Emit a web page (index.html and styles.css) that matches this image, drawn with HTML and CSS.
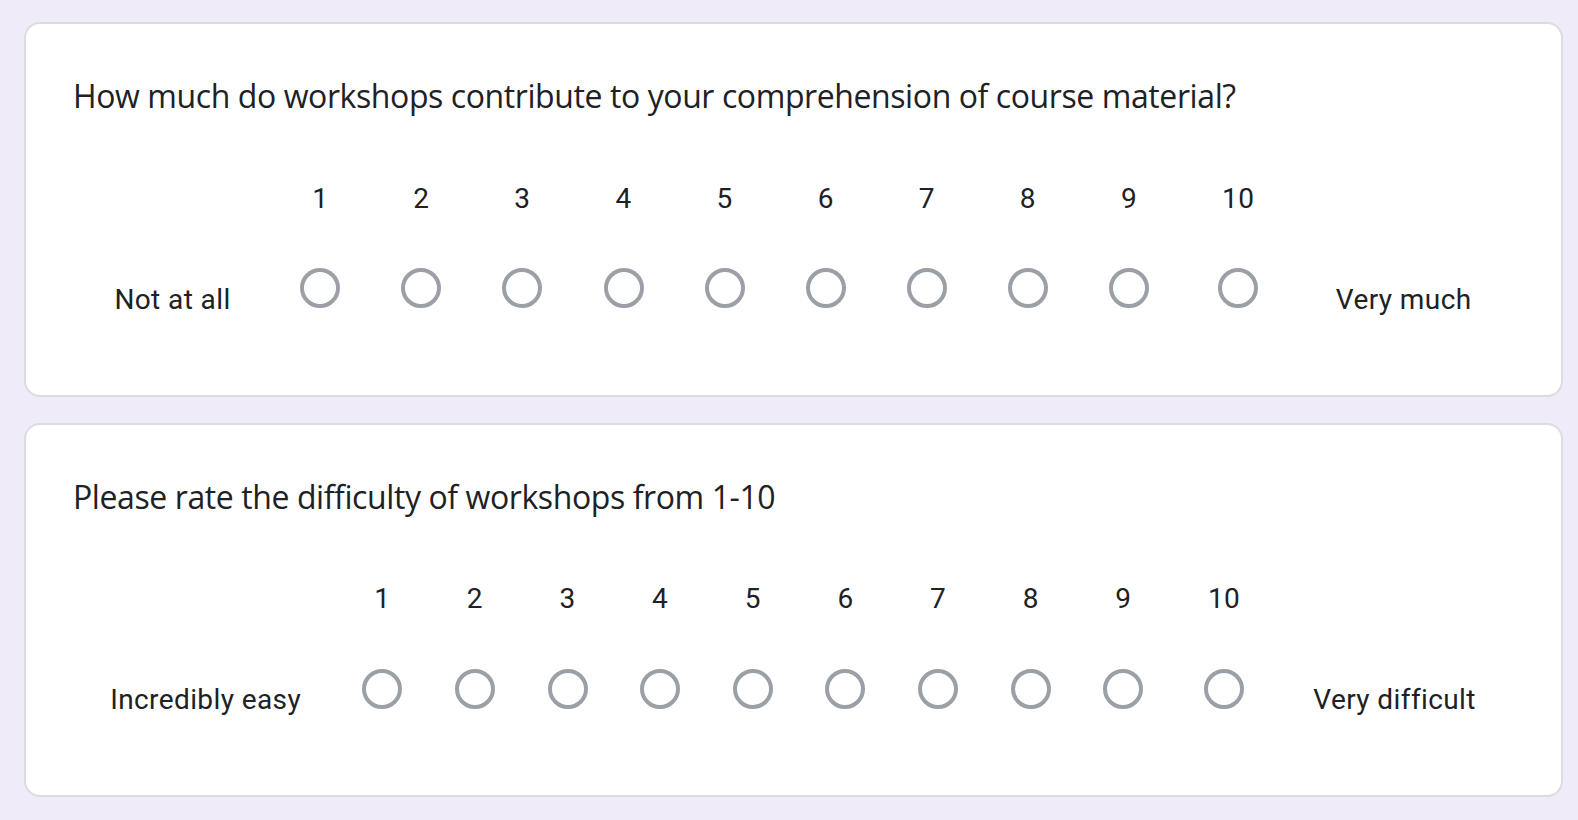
FILE: index.html
```html
<!DOCTYPE html>
<html lang="en">
<head>
<meta charset="utf-8">
<title>Workshop survey</title>
<link rel="stylesheet" href="styles.css">
</head>
<body>
<main class="page">
  <section class="card">
    <h2 class="question">How much do workshops contribute to your comprehension of course material?</h2>
    <div class="scale">
      <div class="end-label">Not at all</div>
      <label class="col"><span class="num">1</span><span class="radio"></span></label>
      <label class="col"><span class="num">2</span><span class="radio"></span></label>
      <label class="col"><span class="num">3</span><span class="radio"></span></label>
      <label class="col"><span class="num">4</span><span class="radio"></span></label>
      <label class="col"><span class="num">5</span><span class="radio"></span></label>
      <label class="col"><span class="num">6</span><span class="radio"></span></label>
      <label class="col"><span class="num">7</span><span class="radio"></span></label>
      <label class="col"><span class="num">8</span><span class="radio"></span></label>
      <label class="col"><span class="num">9</span><span class="radio"></span></label>
      <label class="col"><span class="num">10</span><span class="radio"></span></label>
      <div class="end-label">Very much</div>
    </div>
  </section>
  <section class="card">
    <h2 class="question">Please rate the difficulty of workshops from 1-10</h2>
    <div class="scale">
      <div class="end-label">Incredibly easy</div>
      <label class="col"><span class="num">1</span><span class="radio"></span></label>
      <label class="col"><span class="num">2</span><span class="radio"></span></label>
      <label class="col"><span class="num">3</span><span class="radio"></span></label>
      <label class="col"><span class="num">4</span><span class="radio"></span></label>
      <label class="col"><span class="num">5</span><span class="radio"></span></label>
      <label class="col"><span class="num">6</span><span class="radio"></span></label>
      <label class="col"><span class="num">7</span><span class="radio"></span></label>
      <label class="col"><span class="num">8</span><span class="radio"></span></label>
      <label class="col"><span class="num">9</span><span class="radio"></span></label>
      <label class="col"><span class="num">10</span><span class="radio"></span></label>
      <div class="end-label">Very difficult</div>
    </div>
  </section>
</main>
</body>
</html>
```

FILE: styles.css
```css
html, body {
  margin: 0;
  padding: 0;
  background: #f0ebf8;
}

body {
  width: 1578px;
  height: 820px;
  overflow: hidden;
  font-family: Roboto, "Liberation Sans", sans-serif;
  color: #202124;
}

.page {
  display: flex;
  flex-direction: column;
  gap: 26px;
  padding: 22px 15px 0 24px;
}

.card {
  background: #ffffff;
  border: 2px solid #dadce0;
  border-radius: 16px;
  padding: 48px 47px 75px 46px;
}

.question {
  margin: 0 0 0 1px;
  font-family: "Open Sans", "Noto Sans", sans-serif;
  font-weight: 400;
  font-size: 32px;
  line-height: 48px;
  letter-spacing: -0.41px;
  color: #202124;
}

.scale {
  display: flex;
  align-items: flex-end;
  margin: 58.7px 3.3px 0;
  letter-spacing: 0.4px;
}

.end-label {
  flex: 1 1 auto;
  text-align: center;
  font-size: 28px;
  line-height: 40px;
  white-space: nowrap;
}

.col {
  flex: 1 1 auto;
  display: flex;
  flex-direction: column;
  align-items: center;
  padding: 0 3.4px;
}

.num {
  font-size: 28px;
  line-height: 40px;
}

.radio {
  box-sizing: border-box;
  width: 40px;
  height: 40px;
  margin: 49.5px -12px 11.5px;
  border: 4px solid #9aa0a6;
  border-radius: 50%;
}
```
